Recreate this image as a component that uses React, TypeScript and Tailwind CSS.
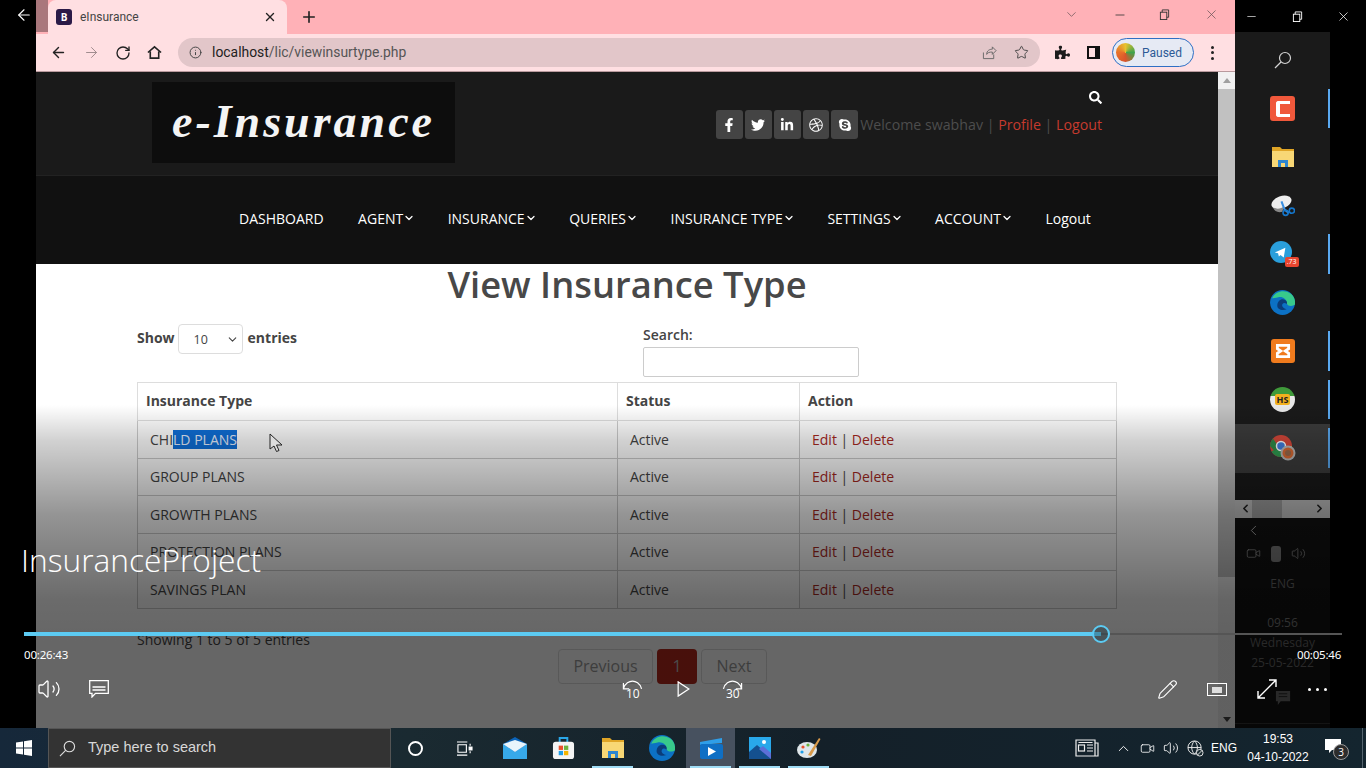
import React from "react";
import {
  ArrowLeft,
  ArrowRight,
  ChevronDown,
  ChevronLeft,
  ChevronRight,
  ChevronUp,
  Info,
  Minus,
  Pencil,
  Plus,
  RotateCw,
  Star,
  Video,
  Volume2,
  X,
} from "lucide-react";
import { FaDribbble, FaFacebookF, FaLinkedinIn, FaPuzzlePiece, FaSearch, FaSkype, FaTwitter } from "react-icons/fa";

const RestoreIcon = ({ className = "" }: { className?: string }) => (
  <svg viewBox="0 0 12 12" className={className} fill="none" stroke="currentColor" strokeWidth="1">
    <rect x="1.5" y="3.5" width="7" height="8" />
    <path d="M3.5 3.5V1h7v8H8.5" />
  </svg>
);

const SearchGlass = ({ className = "" }: { className?: string }) => (
  <svg viewBox="0 0 18 18" className={className} fill="none" stroke="currentColor" strokeWidth="1.2">
    <circle cx="11" cy="7" r="5.5" />
    <path d="M7 11l-6 6" />
  </svg>
);

const FolderIcon = () => (
  <svg viewBox="0 0 24 22" className="w-[24px] h-[22px]">
    <path d="M1 1h8l2 2h12v18H1z" fill="#e0a526" />
    <path d="M1 5h22v16H1z" fill="#f8d775" />
    <path d="M7 21v-7h10v7h-3v-4h-4v4z" fill="#2e86d0" />
  </svg>
);

const EdgeIcon = ({ size = 26 }: { size?: number }) => (
  <svg viewBox="0 0 24 24" width={size} height={size}>
    <circle cx="12" cy="12" r="12" fill="#0c71c4" />
    <path d="M2 8C5 1 14-1 20 3.500c3 2.500 4.500 6 4 10.500-2 2-8 2-8-2 0-3-4-6-8-5-3 .7-5 1-6 1z" fill="#38c98b" />
    <path d="M7 15c0-4 3-6.500 6-6 3 .4 4 3 3 4.500-1-1-3-1.500-4 0s0 4 4 5c-5 2-9-.5-9-3.500z" fill="#0b3c78" />
  </svg>
);

const ChromeIcon = () => (
  <svg viewBox="0 0 26 26" className="w-[26px] h-[26px]">
    <circle cx="11" cy="11" r="11" fill="#d8483a" />
    <path d="M11 11L1.500 16.500A11 11 0 0 0 11 22z" fill="#2f9e52" />
    <path d="M0 11a11 11 0 0 1 3-7.500L8 11l-3 5.500z" fill="#2f8e4a" />
    <path d="M11 11h11a11 11 0 0 1-11 11z" fill="#e6b72f" />
    <circle cx="11" cy="11" r="4.500" fill="#3f7fe0" stroke="#fff" strokeWidth="1.500" />
    <circle cx="18" cy="18" r="7.500" fill="#b9b9b9" />
    <circle cx="18" cy="18" r="5.500" fill="#d96a33" />
    <circle cx="18" cy="18" r="3" fill="#9b6a4a" />
  </svg>
);

const SideItem = ({ children, bar, active }: { children: React.ReactNode; bar?: boolean; active?: boolean }) => (
  <div className={`w-full h-[48.5px] flex items-center justify-center relative ${active ? "bg-[#3c3c3c]" : ""}`}>
    {children}
    {bar && <div className="absolute right-0 top-[4px] bottom-[5px] w-[2px] bg-[#5aa9f0]" />}
  </div>
);

const SidePanel = () => (
  <div className="w-[95px] h-full bg-[#1a1a1a] flex flex-col items-center relative">
    <div className="h-[4px] w-full" />
    <SideItem>
      <SearchGlass className="w-[18px] h-[18px] text-[#d4d4d4]" />
    </SideItem>
    <SideItem bar>
      <div className="w-[25px] h-[25px] rounded-[3px] bg-[#f0583b] flex items-center justify-center">
        <div className="w-[14px] h-[16px] border-l-[4px] border-y-[3px] border-white rounded-l-[3px]" />
      </div>
    </SideItem>
    <SideItem>
      <FolderIcon />
    </SideItem>
    <SideItem>
      <svg viewBox="0 0 24 24" className="w-[25px] h-[25px]">
        <ellipse cx="11" cy="9" rx="10" ry="6" fill="#eee" transform="rotate(-20 11 9)" />
        <path d="M3 14c4 2 8 1 10-1l-1 5c-4 1-8 0-9-4z" fill="#888" />
        <path d="M11 8l3 8 4 3" stroke="#3a8fe0" strokeWidth="2" fill="none" />
        <circle cx="15" cy="19" r="2.500" fill="none" stroke="#1577cc" strokeWidth="1.500" />
        <circle cx="21" cy="17" r="2.500" fill="none" stroke="#1577cc" strokeWidth="1.500" />
      </svg>
    </SideItem>
    <SideItem bar>
      <div className="relative w-[26px] h-[26px]">
        <div className="w-[22px] h-[22px] rounded-full bg-[#2a9fdc] flex items-center justify-center">
          <svg viewBox="0 0 16 16" className="w-[13px] h-[13px]">
            <path d="M1 8l13-6-2 12-4-3-2 2-1-4z" fill="#fff" />
          </svg>
        </div>
        <span className="absolute right-[-3px] bottom-0 bg-[#e8452f] text-white text-[7px] leading-[10px] px-[2px] rounded-[2px]">.73</span>
      </div>
    </SideItem>
    <SideItem>
      <EdgeIcon size={25} />
    </SideItem>
    <SideItem bar>
      <div className="w-[24px] h-[24px] rounded-[3px] bg-[#f07b1d] flex items-center justify-center">
        <svg viewBox="0 0 16 16" className="w-[18px] h-[18px]" fill="none" stroke="#fff" strokeWidth="2.500">
          <path d="M3 3h10v3l-3 2 3 2v3H3v-3l3-2-3-2z" />
        </svg>
      </div>
    </SideItem>
    <SideItem bar>
      <div className="w-[25px] h-[25px] rounded-full bg-[linear-gradient(#3f9a3a_0_35%,#e8e8e8_35%)] flex items-center justify-center">
        <span className="bg-[#f2b01e] text-[#222] text-[9px] font-bold leading-[11px] px-[2px] rounded-[2px]">HS</span>
      </div>
    </SideItem>
    <SideItem bar active>
      <ChromeIcon />
    </SideItem>
    <div className="h-[27px] w-full" />
    <div className="h-[18px] w-full bg-[#c4c4c4] flex items-center justify-between px-[4px] text-[#222]">
      <ChevronLeft size={13} strokeWidth={3} />
      <div className="absolute left-[17px] w-[30px] h-[18px] bg-[#a0a0a0]" />
      <ChevronRight size={13} strokeWidth={3} />
    </div>
    <div className="flex-1 w-full bg-[#111] text-[#8a8a8a] flex flex-col items-center">
      <div className="w-full pl-[10px] pt-[4px] h-[24px]">
        <ChevronLeft size={17} strokeWidth={1.2} className="text-[#bbb]" />
      </div>
      <div className="flex gap-[10px] items-center h-[24px] mr-[13px] text-[#888]">
        <Video size={15} strokeWidth={1.3} />
        <div className="w-[10px] h-[16px] rounded-[3px] bg-[#777]" />
        <Volume2 size={15} strokeWidth={1.3} />
      </div>
      <div className="text-[12px] leading-[16px] mt-[10px] text-[#666]">ENG</div>
      <div className="text-[12px] leading-[16px] mt-[23px] text-[#777]">09:56</div>
      <div className="text-[12px] leading-[16px] mt-[4px] text-[#666]">Wednesday</div>
      <div className="text-[12px] leading-[16px] mt-[4px] text-[#666]">25-05-2022</div>
      <svg viewBox="0 0 18 18" className="w-[17px] h-[17px] mt-[19px] ml-[2px]">
        <path d="M1 1h15v11H6l-3 4v-4H1z" fill="#666" />
        <path d="M4 4h9M4 7h9" stroke="#222" />
      </svg>
      <div className="w-full h-[1px] bg-[#333] mt-[16px]" />
    </div>
  </div>
);

const BrowserChrome = () => (
  <>
    <div className="h-[34px] bg-[#ffb1b7] flex items-end relative">
      <div className="w-[12px] h-[32px] bg-[#a9777c] self-start" />
      <div className="w-[239px] h-[34px] bg-[#ffdfe2] rounded-t-[8px] flex items-center pl-[8px] pr-[10px] gap-[8px]">
        <div className="w-[16px] h-[16px] rounded-[3px] bg-[#2b1a47] text-white text-[10px] font-bold flex items-center justify-center">B</div>
        <span className="text-[12px] text-[#444] font-['Roboto',sans-serif] flex-1">eInsurance</span>
        <X size={14} strokeWidth={2.4} className="text-[#222]" />
      </div>
      <Plus size={18} strokeWidth={2.2} className="text-[#222] ml-[13px] mb-[8px]" />
      <div className="flex-1" />
      <div className="flex items-center self-start h-[29px] text-[#6b5558]">
        <ChevronDown size={15} strokeWidth={1.2} className="mr-[34px]" />
        <Minus size={14} strokeWidth={1.4} className="mr-[32px] text-[#333]" />
        <RestoreIcon className="w-[11px] h-[11px] mr-[34px] text-[#333]" />
        <X size={15} strokeWidth={1.2} className="mr-[16px]" />
      </div>
    </div>
    <div className="h-[38px] bg-[#ffdfe2] border-b border-[#b99a9d] flex items-center text-[#222]">
      <ArrowLeft size={17} strokeWidth={2} className="ml-[14px]" />
      <ArrowRight size={17} strokeWidth={1.4} className="ml-[16px] text-[#a08c8e]" />
      <RotateCw size={16} strokeWidth={2} className="ml-[15px]" />
      <svg viewBox="0 0 16 16" className="w-[15px] h-[15px] ml-[16px]" fill="none" stroke="currentColor" strokeWidth="1.700">
        <path d="M1 8l7-6 7 6M3.500 7v7h9V7" />
      </svg>
      <div className="ml-[16px] w-[862px] h-[29px] rounded-full bg-[#e2c6c9] flex items-center pl-[11px] pr-[11px] font-['Roboto',sans-serif]">
        <Info size={13} strokeWidth={1.8} className="text-[#444]" />
        <span className="ml-[10px] text-[13.900px] text-[#555]">
          <span className="text-[#222]">localhost</span>/lic/viewinsurtype.php
        </span>
        <div className="flex-1" />
        <svg viewBox="0 0 16 16" className="w-[15px] h-[15px] text-[#666]" fill="none" stroke="currentColor" strokeWidth="1">
          <path d="M1.500 8v6.500h11V10M5 10c0-4 3-5.500 6-5.500V2l4 4-4 4V7.500C8 7.500 6 8 5 10z" />
        </svg>
        <Star size={15} strokeWidth={1.5} className="ml-[17px] text-[#444]" />
      </div>
      <FaPuzzlePiece size={15} className="ml-[15px] text-[#1c1c1c]" />
      <div className="ml-[17px] w-[13px] h-[13px] border-[2px] border-[#111] border-r-[5px]" />
      <div className="ml-[12px] w-[82px] h-[29px] rounded-full border-[1.5px] border-[#2f6fc4] bg-[#e6eaf4] flex items-center pl-[3px] gap-[7px]">
        <div className="w-[19px] h-[19px] rounded-full bg-[conic-gradient(#e8c22e,#3fa34d,#d9542c,#e8702a,#e8c22e)]" />
        <span className="text-[12px] text-[#2d5a96] font-['Roboto',sans-serif]">Paused</span>
      </div>
      <div className="ml-[17px] flex flex-col gap-[2.500px]">
        <div className="w-[3px] h-[3px] rounded-full bg-[#222]" />
        <div className="w-[3px] h-[3px] rounded-full bg-[#222]" />
        <div className="w-[3px] h-[3px] rounded-full bg-[#222]" />
      </div>
    </div>
  </>
);

const SiteHeader = () => (
  <div className="h-[104px] bg-[#1a1a1a] flex pt-[10px] pl-[116px] border-b border-[#222]">
    <div className="w-[303px] h-[81px] bg-[#0d0d0d] flex items-center justify-center">
      <span className="text-[#f4f4f4] italic font-bold text-[46px] tracking-[3px] mb-[2px] font-['Liberation_Serif',serif]">e-Insurance</span>
    </div>
    <div className="ml-[261px] w-[386px] flex flex-col items-end">
      <FaSearch size={13} className="text-white mt-[9px]" />
      <div className="flex items-center mt-[6px] w-full">
        {[FaFacebookF, FaTwitter, FaLinkedinIn, FaDribbble, FaSkype].map((Icon, i) => (
          <div key={i} className="w-[27px] h-[29px] mr-[2px] rounded-[3px] bg-[#444] text-white flex items-center justify-center">
            <Icon size={14} />
          </div>
        ))}
        <span className="text-[14.200px] text-[#4d4d4d] whitespace-nowrap">
          Welcome swabhav | <span className="text-[#c63a2e]">Profile</span> | <span className="text-[#c63a2e]">Logout</span>
        </span>
      </div>
    </div>
  </div>
);

const SiteNav = () => (
  <div className="h-[88px] bg-[#111] flex items-center pb-[4px] pl-[203px] text-white text-[14px] gap-[32.5px] whitespace-nowrap">
    <span className="mr-[2px]">DASHBOARD</span>
    {["AGENT", "INSURANCE", "QUERIES", "INSURANCE TYPE", "SETTINGS", "ACCOUNT"].map((item) => (
      <span key={item} className="flex items-center">
        {item}
        <ChevronDown size={12} strokeWidth={2.5} />
      </span>
    ))}
    <span>Logout</span>
  </div>
);

const rows = ["CHILD PLANS", "GROUP PLANS", "GROWTH PLANS", "PROTECTION PLANS", "SAVINGS PLAN"];

const PageBody = () => (
  <div className="bg-white text-[#444] pl-[101px]">
    <h1 className="w-[980px] text-center text-[36.300px] leading-[40px] font-semibold text-[#484848]">View Insurance Type</h1>
    <div className="flex h-[78px] w-[980px]">
      <div className="w-[506px] flex items-center h-[30px] mt-[20px] text-[14px] font-bold">
        <span className="mb-[4px]">Show</span>
        <div className="ml-[3px] mr-[5px] w-[65px] h-[30px] border border-[#ddd] rounded-[4px] flex items-center justify-between pl-[15px] pr-[3px] text-[12.500px] font-normal">
          <span className="mt-[3px]">10</span>
          <ChevronDown size={13} />
        </div>
        <span className="mb-[4px]">entries</span>
      </div>
      <div className="pt-[21px] text-[14px] font-semibold leading-[20px]">
        Search:
        <div className="w-[216px] h-[30px] mt-[2px] border border-[#ccc] rounded-[2px]" />
      </div>
    </div>
    <table className="w-[980px] table-fixed border-collapse border border-[#ccc] text-[14px]">
      <thead>
        <tr className="h-[38px] text-left">
          <th className="w-[480px] pl-[8px] pb-[2px] font-bold border border-[#ddd]">Insurance Type</th>
          <th className="w-[182px] pl-[8px] pb-[2px] font-bold border border-[#ddd]">Status</th>
          <th className="pl-[8px] pb-[2px] font-bold border border-[#ddd]">Action</th>
        </tr>
      </thead>
      <tbody>
        {rows.map((name, i) => (
          <tr key={name} className="h-[37.500px]">
            <td className="pl-[12px] border border-[#ccc]">
              {i === 0 ? (
                <>
                  CHI<span className="bg-[#0f6fd8] text-[#e8f0ff]">LD PLANS</span>
                </>
              ) : (
                name
              )}
            </td>
            <td className="pl-[12px] border border-[#ccc]">Active</td>
            <td className="pl-[12px] border border-[#ccc]">
              <span className="text-[#a8281e]">Edit</span> | <span className="text-[#a8281e]">Delete</span>
            </td>
          </tr>
        ))}
      </tbody>
    </table>
    <div className="text-[14px] mt-[21px] leading-[20px]">Showing 1 to 5 of 5 entries</div>
    <div className="flex mt-[-1px] ml-[421px] gap-[4px] text-[16px] text-[#999] h-[60px]">
      <div className="w-[95px] h-[35px] border border-[#ddd] rounded-[4px] flex items-center justify-center">Previous</div>
      <div className="w-[40px] h-[35px] bg-[#b3271c] text-[#bbb] rounded-[4px] flex items-center justify-center">1</div>
      <div className="w-[66px] h-[35px] border border-[#ddd] rounded-[4px] flex items-center justify-center">Next</div>
    </div>
  </div>
);

const TaskIcon = ({ children, bar, active }: { children: React.ReactNode; bar?: boolean; active?: boolean }) => (
  <div className={`w-[49px] h-full flex items-center justify-center relative ${active ? "bg-[#47515f]" : ""}`}>
    {children}
    {bar && <div className="absolute bottom-0 left-[4px] right-[4px] h-[2px] bg-[#9fdcf5]" />}
  </div>
);

const Taskbar = () => (
  <div className="h-[40px] bg-[linear-gradient(90deg,#16283a,#1a2a31_30%,#142029_60%,#14252f)] flex items-center text-white relative">
    <div className="w-[48px] h-full flex items-center justify-center">
      <svg viewBox="0 0 16 16" className="w-[16px] h-[16px]" fill="#fff">
        <path d="M0 2.500l7-1v6H0zM8 1.300L16 0v7.500H8zM0 8.500h7v6l-7-1zM8 8.500h8V16l-8-1.300z" />
      </svg>
    </div>
    <div className="w-[343px] h-full bg-[#333] border border-[#555] flex items-center pl-[10px] gap-[12px]">
      <SearchGlass className="w-[17px] h-[17px] text-[#ddd]" />
      <span className="text-[14.500px] text-[#d8d8d8] font-['Liberation_Sans',sans-serif]">Type here to search</span>
    </div>
    <div className="w-[49px] flex justify-center">
      <div className="w-[15px] h-[15px] rounded-full border-[2px] border-white" />
    </div>
    <div className="w-[48px] flex justify-center">
      <svg viewBox="0 0 18 16" className="w-[17px] h-[15px]" fill="none" stroke="#fff" strokeWidth="1.200">
        <path d="M1 1h11M1 15h11M2 4h9v8H2zM15 3v2M15 11v2" />
        <rect x="14" y="6.500" width="3" height="3" fill="#fff" />
      </svg>
    </div>
    <div className="w-[2px]" />
    <TaskIcon>
      <svg viewBox="0 0 24 22" className="w-[24px] h-[22px]">
        <path d="M12 0l12 7v15H0V7z" fill="#0c64b8" />
        <path d="M0 7l12 8 12-8v15H0z" fill="#37a9ea" />
        <path d="M0 7l12 8 12-8-12-4z" fill="#e8f4fc" />
      </svg>
    </TaskIcon>
    <TaskIcon>
      <svg viewBox="0 0 24 24" className="w-[23px] h-[23px]">
        <path d="M8 6V1h8v5" fill="none" stroke="#2aa7e8" strokeWidth="2" />
        <rect x="1" y="5" width="22" height="18" rx="3" fill="#f4f4f4" />
        <rect x="7" y="9" width="4.500" height="4.500" fill="#e8502c" />
        <rect x="12.500" y="9" width="4.500" height="4.500" fill="#6db33f" />
        <rect x="7" y="14.500" width="4.500" height="4.500" fill="#1e9ee8" />
        <rect x="12.500" y="14.500" width="4.500" height="4.500" fill="#f4b400" />
      </svg>
    </TaskIcon>
    <TaskIcon bar>
      <FolderIcon />
    </TaskIcon>
    <TaskIcon>
      <EdgeIcon />
    </TaskIcon>
    <TaskIcon bar active>
      <svg viewBox="0 0 24 22" className="w-[24px] h-[22px]">
        <path d="M1 5l22-4v5L1 8z" fill="#2f9ee8" />
        <rect x="1" y="7" width="23" height="15" rx="2" fill="#0f6fc4" />
        <path d="M9 10v9l8-4.500z" fill="#fff" />
      </svg>
    </TaskIcon>
    <TaskIcon bar>
      <svg viewBox="0 0 22 22" className="w-[22px] h-[22px]">
        <rect width="22" height="22" fill="#29a8ea" />
        <circle cx="15" cy="5" r="2" fill="#fff" />
        <path d="M0 22V15l8-7 14 12v2z" fill="#14508f" />
        <path d="M10 12l4-3 8 7v6z" fill="#5c6fd8" />
      </svg>
    </TaskIcon>
    <TaskIcon bar>
      <svg viewBox="0 0 24 22" className="w-[24px] h-[22px]">
        <ellipse cx="10" cy="13" rx="10" ry="8" fill="#dfe6ea" />
        <circle cx="6" cy="10" r="1.600" fill="#e8502c" />
        <circle cx="11" cy="8" r="1.600" fill="#6db33f" />
        <circle cx="5" cy="15" r="1.600" fill="#1e9ee8" />
        <path d="M11 18L22 1l1.500 1L14 19z" fill="#d99a4a" />
      </svg>
    </TaskIcon>
    <div className="flex-1" />
    <div className="w-[36px] flex justify-center">
      <svg viewBox="0 0 24 18" className="w-[24px] h-[18px]" fill="none" stroke="#eee" strokeWidth="1.200">
        <path d="M1 1h19v16H1zM20 4h3v13h-3" />
        <rect x="3.500" y="6" width="6" height="6" />
        <path d="M12 6h6M12 9h6M12 12h6M3.500 3.500h14" />
      </svg>
    </div>
    <div className="w-[6px]" />
    <div className="w-[24px] flex justify-center"><ChevronUp size={17} strokeWidth={1.3} /></div>
    <div className="w-[24px] flex justify-center"><Video size={15} strokeWidth={1.3} /></div>
    <div className="w-[24px] flex justify-center"><Volume2 size={16} strokeWidth={1.3} /></div>
    <div className="w-[24px] flex justify-center">
      <svg viewBox="0 0 18 18" className="w-[17px] h-[17px]" fill="none" stroke="#eee" strokeWidth="1">
        <circle cx="8" cy="8" r="7" />
        <path d="M1 8h14M8 1c-4 4-4 10 0 14M8 1c4 4 4 10 0 14" />
        <circle cx="13.500" cy="13.500" r="3.500" fill="#1a2a31" />
        <path d="M11 16l5-5" />
      </svg>
    </div>
    <div className="w-[34px] text-center text-[12px] font-['Liberation_Sans',sans-serif]">ENG</div>
    <div className="w-[74px] text-center text-[12px] leading-[18px] font-['Liberation_Sans',sans-serif] mt-[-1px]">
      <div>19:53</div>
      <div>04-10-2022</div>
    </div>
    <div className="w-[36px] flex justify-center relative">
      <svg viewBox="0 0 16 16" className="w-[16px] h-[16px] mt-[-4px]" fill="#fff">
        <path d="M0 1h16v11H7l-3 3v-3H0z" />
      </svg>
      <div className="absolute left-[18px] top-[2px] w-[16px] h-[16px] rounded-full bg-[#2c2c2c] border border-[#999] text-[10px] flex items-center justify-center">3</div>
    </div>
    <div className="w-[11px]" />
    <div className="w-[1px] h-full bg-[#55646e] mr-[3px]" />
  </div>
);

const VideoOverlay = () => (
  <div className="absolute left-0 top-0 w-[1366px] h-[728px] pointer-events-none text-white">
    <div className="absolute left-0 top-[405px] w-[1366px] h-[323px] bg-[linear-gradient(to_bottom,transparent,rgba(0,0,0,0.18)_11%,rgba(0,0,0,0.42)_34%,rgba(0,0,0,0.58)_60%,rgba(0,0,0,0.6)_73%)]" />
    {/* mouse pointer */}
    <svg viewBox="0 0 14 20" className="absolute left-[269px] top-[433px] w-[14px] h-[20px]">
      <path d="M1 1v15l4-3 2.500 5.500 2.500-1L7.500 12H13z" fill="#ddd" stroke="#222" strokeWidth="1" />
    </svg>
    <div className="absolute left-[21px] top-[538px] text-[31.700px] leading-[44px] font-light font-['Open_Sans',sans-serif]">InsuranceProject</div>
    <div className="absolute left-[24px] top-[632px] w-[1077px] h-[4px] bg-[#5ccbf3]" />
    <div className="absolute left-[1101px] top-[633px] w-[241px] h-[2px] bg-[#555]" />
    <div className="absolute left-[1092px] top-[625px] w-[18px] h-[18px] rounded-full border-[2px] border-[#5ccbf3] bg-[#1c3a46]/40" />
    <div className="absolute left-[24px] top-[647px] text-[11.500px] tracking-[-0.2px] leading-[16px] font-['Noto_Sans',sans-serif]">00:26:43</div>
    <div className="absolute left-[1297px] top-[647px] text-[11.500px] tracking-[-0.2px] leading-[16px] font-['Noto_Sans',sans-serif]">00:05:46</div>
    <Volume2 size={24} strokeWidth={1.3} className="absolute left-[37px] top-[677px]" />
    <svg viewBox="0 0 20 18" className="absolute left-[89px] top-[680px] w-[20px] h-[18px]" fill="none" stroke="#fff" strokeWidth="1.300">
      <path d="M.7.7h18.600v12.600H6.500L3 17v-3.700H.7z" />
      <path d="M3.500 7h13M3.500 10h13" />
    </svg>
    <div className="absolute left-[622px] top-[680px] w-[22px] h-[20px]">
      <svg viewBox="0 0 22 10" className="absolute top-0 left-0 w-[21px] h-[10px]" fill="none" stroke="#fff" strokeWidth="1.300">
        <path d="M1.500 9C3 3 8 1 11 1s8 2 9.500 8M1.500 3v6h6" />
      </svg>
      <span className="absolute left-[4px] top-[7px] text-[12px] leading-[14px]">10</span>
    </div>
    <svg viewBox="0 0 14 18" className="absolute left-[677px] top-[681px] w-[13px] h-[16px]" fill="none" stroke="#fff" strokeWidth="1.400">
      <path d="M1 1v16l12-8z" />
    </svg>
    <div className="absolute left-[722px] top-[680px] w-[22px] h-[20px]">
      <svg viewBox="0 0 22 10" className="absolute top-0 left-0 w-[21px] h-[10px]" fill="none" stroke="#fff" strokeWidth="1.300">
        <path d="M1.500 9C3 3 8 1 11 1s8 2 9.500 8M20.500 3v6h-6" />
      </svg>
      <span className="absolute left-[4px] top-[7px] text-[12px] leading-[14px]">30</span>
    </div>
    <Pencil size={21} strokeWidth={1.3} className="absolute left-[1157px] top-[679px]" />
    <div className="absolute left-[1207px] top-[683px] w-[20px] h-[13px] border-[1.5px] border-white flex items-center justify-center">
      <div className="w-[10px] h-[6px] bg-[#ddd]" />
    </div>
    <svg viewBox="0 0 20 20" className="absolute left-[1257px] top-[679px] w-[20px] h-[20px]" fill="none" stroke="#fff" strokeWidth="1.400">
      <path d="M1 19L19 1M12 1h7v7M1 12v7h7" />
    </svg>
    <div className="absolute left-[1308px] top-[688px] flex gap-[5px]">
      <div className="w-[3px] h-[3px] rounded-full bg-white" />
      <div className="w-[3px] h-[3px] rounded-full bg-white" />
      <div className="w-[3px] h-[3px] rounded-full bg-white" />
    </div>
  </div>
);

export default function App() {
  return (
    <div className="relative w-[1366px] h-[768px] overflow-hidden bg-black font-['Open_Sans',sans-serif] flex flex-col">
      <div className="flex h-[728px]">
        <div className="w-[36px] pt-[6px] pl-[15px] text-white">
          <ArrowLeft size={18} strokeWidth={1.5} />
        </div>
        <div className="w-[1199px] flex flex-col">
          <BrowserChrome />
          <div className="flex flex-1 min-h-0">
            <div className="w-[1182px] overflow-hidden bg-white">
              <SiteHeader />
              <SiteNav />
              <PageBody />
            </div>
            <div className="w-[17px] bg-[#f1f1f1] flex flex-col items-center">
              <div className="h-[17px] flex items-center">
                <div className="border-x-[4px] border-x-transparent border-b-[5px] border-b-[#a0a0a0]" />
              </div>
              <div className="w-full h-[488px] bg-[#c1c1c1]" />
              <div className="flex-1" />
              <div className="h-[17px] flex items-center">
                <div className="border-x-[4px] border-x-transparent border-t-[5px] border-t-[#444]" />
              </div>
            </div>
          </div>
        </div>
        <div className="w-[131px] flex flex-col">
          <div className="h-[32px] flex items-center text-white">
            <Minus size={13} strokeWidth={1.2} className="ml-[10px]" />
            <RestoreIcon className="w-[11px] h-[11px] ml-[34px]" />
            <X size={15} strokeWidth={1.2} className="ml-[33px]" />
          </div>
          <div className="flex-1 min-h-0">
            <SidePanel />
          </div>
        </div>
      </div>
      <Taskbar />
      <VideoOverlay />
    </div>
  );
}
